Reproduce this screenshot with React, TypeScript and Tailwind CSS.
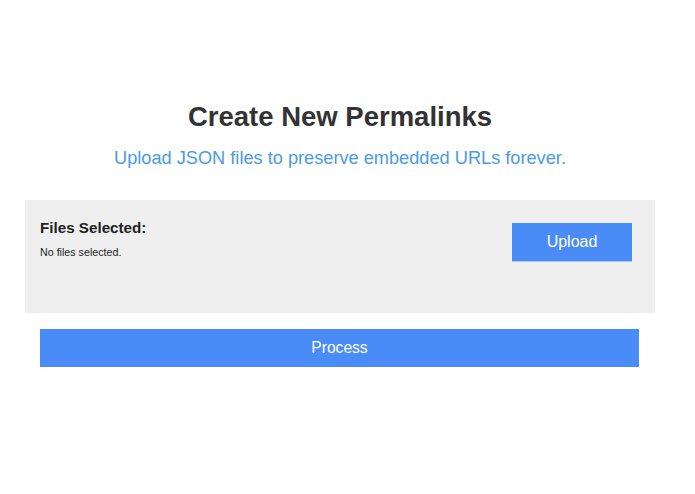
export default function App() {
  return (
    <div className="min-h-[494px] w-[680px] bg-white font-['Liberation_Sans',Arial,sans-serif]">
      <div className="pt-[100px] text-center">
        <h1 className="text-[27.5px] font-bold leading-[34px] text-[#333333]">Create New Permalinks</h1>
        <p className="mt-[13px] text-[18.2px] leading-[22px] text-[#4a9be3]">
          Upload JSON files to preserve embedded URLs forever.
        </p>
      </div>
      <div className="mx-[25px] mt-[31px] flex h-[113px] items-start justify-between bg-[#efefef] pl-[15px] pr-[23px] pt-[18px]">
        <div className="text-[#222222]">
          <div className="text-[15.2px] font-bold leading-[20px]">Files Selected:</div>
          <div className="mt-[7px] text-[10.7px] leading-[14px]">No files selected.</div>
        </div>
        <button className="mt-[5px] h-[38px] w-[120px] bg-[#4a8cf7] text-[16px] text-white shadow-[0_1px_0_#a9c8f5]">
          Upload
        </button>
      </div>
      <button className="ml-[40px] mt-[16px] h-[38px] w-[599px] bg-[#4a8cf7] text-[15.6px] text-white">
        Process
      </button>
    </div>
  );
}
